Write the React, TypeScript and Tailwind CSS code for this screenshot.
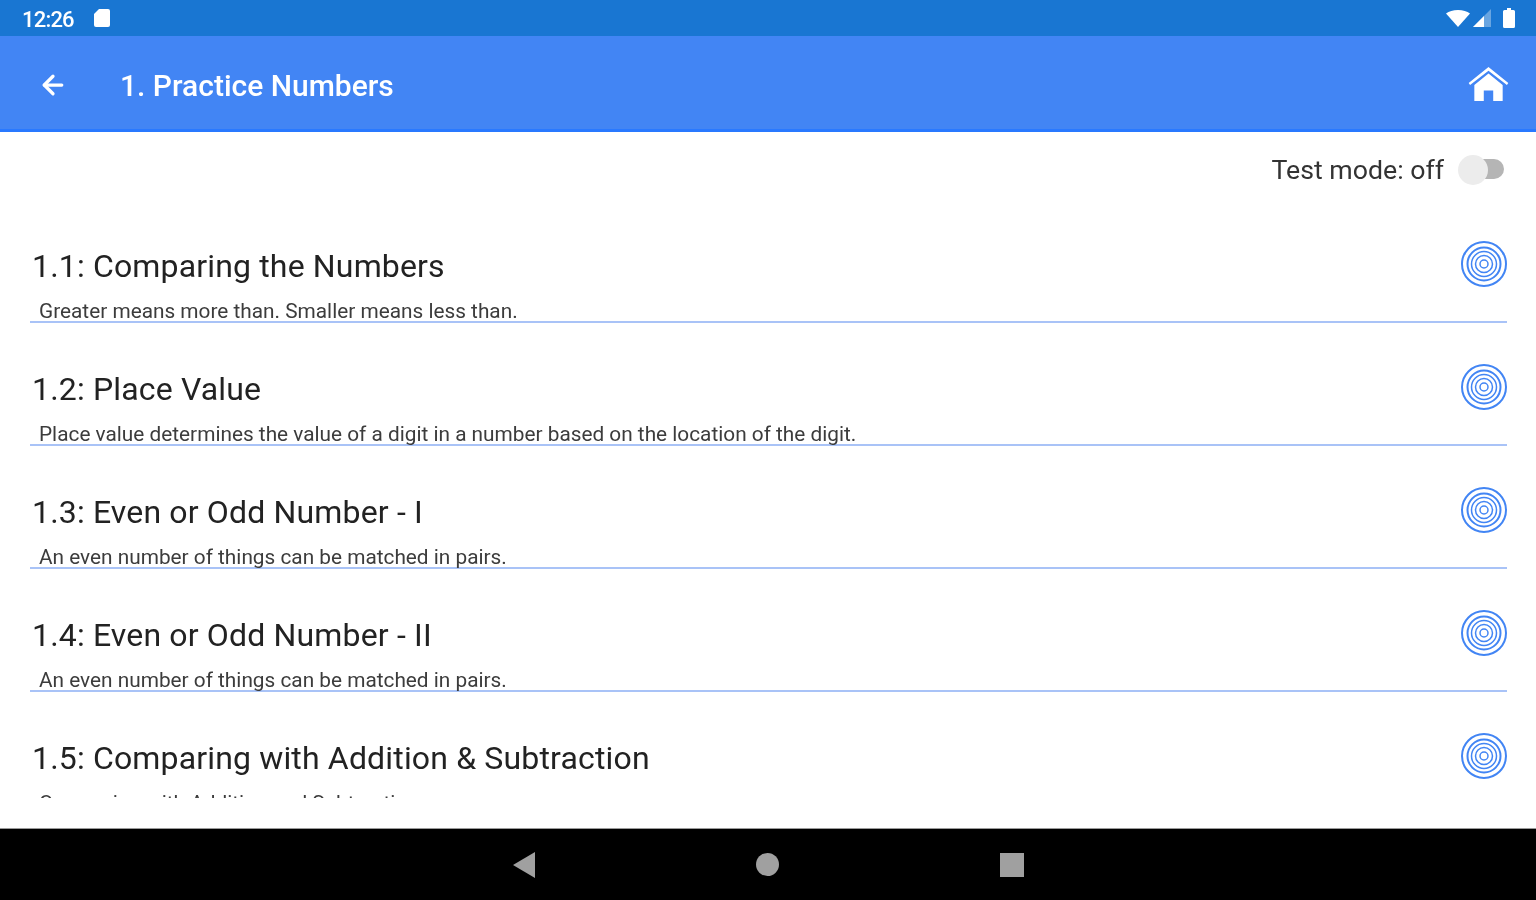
import { ArrowLeft } from 'lucide-react';

const lessons = [
  { title: '1.1: Comparing the Numbers', text: 'Greater means more than. Smaller means less than.' },
  { title: '1.2: Place Value', text: 'Place value determines the value of a digit in a number based on the location of the digit.' },
  { title: '1.3: Even or Odd Number - I', text: 'An even number of things can be matched in pairs.' },
  { title: '1.4: Even or Odd Number - II', text: 'An even number of things can be matched in pairs.' },
  { title: '1.5: Comparing with Addition & Subtraction', text: 'Comparing with Addition and Subtraction' },
];

function TargetIcon() {
  return (
    <svg className="h-[46px] w-[46px] blur-[0.6px]" viewBox="0 0 46 46" fill="none" stroke="#4285f4" aria-hidden="true">
      <circle cx="23" cy="23" r="22" strokeWidth="2" />
      <circle cx="23" cy="23" r="16.5" strokeWidth="2" />
      <circle cx="23" cy="23" r="12.5" strokeWidth="1.5" />
      <circle cx="23" cy="23" r="8.5" strokeWidth="1.5" />
      <circle cx="23" cy="23" r="4" strokeWidth="1.5" />
    </svg>
  );
}

function LessonRow({ title, text }: { title: string; text: string }) {
  return (
    <div className="ml-[30px] mr-[29px] flex h-[123px] shrink-0 flex-col border-b-2 border-[#a9c3f7]">
      <div className="flex items-center justify-between pt-[43px]">
        <h3 className="ml-[2px] text-[32px] leading-[46px] tracking-[0.16px] text-[#222222] blur-[0.5px]">{title}</h3>
        <div className="mt-[-5px]">
          <TargetIcon />
        </div>
      </div>
      <p className="ml-[9px] mt-[12px] text-[20.8px] leading-[20px] text-[#3c3c3c] blur-[0.6px]">{text}</p>
    </div>
  );
}

export default function App() {
  return (
    <div className="flex h-[900px] w-[1536px] flex-col overflow-hidden bg-white font-['Roboto',sans-serif]">
      <div className="flex h-[36px] shrink-0 items-center justify-between bg-[#1976d2] pl-[22px] pr-[21px] text-white">
        <div className="flex items-center gap-[20px]">
          <span className="mt-[2px] text-[22px] font-medium tracking-[-0.8px] blur-[0.5px]">12:26</span>
          <svg className="h-[18px] w-[16px] blur-[0.5px]" viewBox="0 0 16 18" fill="white" aria-hidden="true">
            <path d="M5 0H14a2 2 0 0 1 2 2V16a2 2 0 0 1-2 2H2a2 2 0 0 1-2-2V5Z" />
          </svg>
        </div>
        <div className="flex items-center gap-[3px] blur-[0.5px]">
          <svg className="h-[17px] w-[24px]" viewBox="0 0 24 17" fill="white" aria-hidden="true">
            <path d="M0 3.5C3 1.2 7 0 12 0s9 1.2 12 3.5L12 17Z" />
          </svg>
          <svg className="h-[18px] w-[18px]" viewBox="0 0 18 18" aria-hidden="true">
            <path d="M18 0V18H0Z" fill="white" fillOpacity="0.35" />
            <path d="M11 7V18H0Z" fill="white" />
          </svg>
          <svg className="ml-[9px] h-[20px] w-[12px]" viewBox="0 0 12 20" fill="white" aria-hidden="true">
            <path d="M4 0H8V2H10.5A1.5 1.5 0 0 1 12 3.5V18.5A1.5 1.5 0 0 1 10.5 20H1.5A1.5 1.5 0 0 1 0 18.5V3.5A1.5 1.5 0 0 1 1.5 2H4Z" />
          </svg>
        </div>
      </div>

      <header className="flex h-[96px] shrink-0 items-center justify-between border-b-[3px] border-[#2979ff] bg-[#4285f4] pl-[38px] pr-[27px] text-white">
        <div className="mt-[4px] flex items-center">
          <ArrowLeft className="h-[30px] w-[30px] blur-[0.5px]" strokeWidth={2.6} />
          <h1 className="ml-[52px] mt-[3px] text-[30px] font-medium leading-none blur-[0.5px]">1. Practice Numbers</h1>
        </div>
        <svg className="mt-[3px] h-[34px] w-[41px] blur-[0.5px]" viewBox="0 0 42 36" fill="white" aria-hidden="true">
          <path d="M21 0 42 17 40.5 19 21 4 1.5 19 0 17Z" />
          <path d="M21 7 36 19V36H26V25H16V36H6V19Z" />
        </svg>
      </header>

      <main className="flex min-h-0 flex-1 flex-col bg-white pb-[30px]">
        <div className="flex h-[68px] shrink-0 items-start justify-end pr-[32px] pt-[21px]">
          <span className="text-[26.7px] leading-[34px] text-[#333333] blur-[0.6px]">Test mode: off</span>
          <div className="relative ml-[14px] mt-[2px] h-[26px] w-[46px] blur-[0.4px]">
            <div className="absolute right-0 top-[4px] h-[20px] w-[34px] rounded-full bg-[#b5b5b5]" />
            <div className="absolute left-0 top-0 h-[30px] w-[30px] rounded-full bg-[#ececec]" />
          </div>
        </div>
        <div className="flex min-h-0 flex-1 flex-col overflow-hidden">
          {lessons.map((lesson) => (
            <LessonRow key={lesson.title} title={lesson.title} text={lesson.text} />
          ))}
        </div>
      </main>

      <nav className="flex h-[72px] shrink-0 items-center justify-center gap-[221px] border-t-[1px] border-[#9a9a9a] bg-black">
        <svg className="h-[26px] w-[22px] blur-[0.5px]" viewBox="0 0 22 26" fill="#a0a0a0" aria-hidden="true">
          <path d="M22 0V26L0 13Z" />
        </svg>
        <div className="h-[23px] w-[23px] rounded-full bg-[#a0a0a0] blur-[0.5px]" />
        <div className="h-[24px] w-[24px] bg-[#a0a0a0] blur-[0.5px]" />
      </nav>
    </div>
  );
}
